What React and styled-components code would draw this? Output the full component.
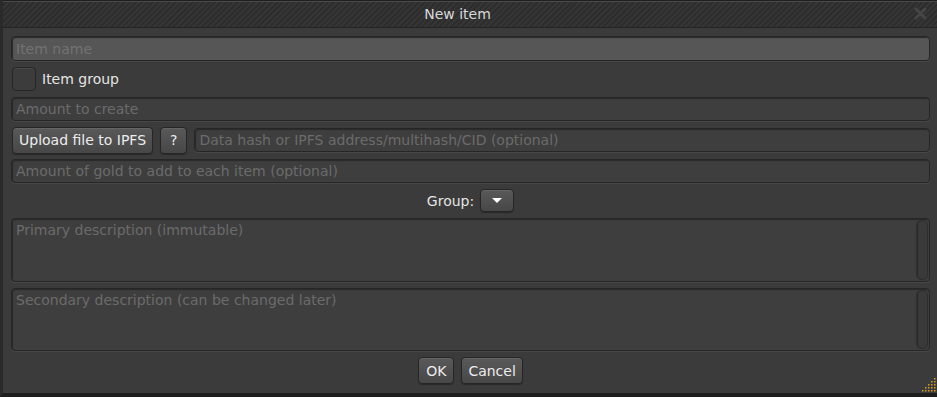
import styled, { createGlobalStyle } from "styled-components";

const Global = createGlobalStyle`
    html, body {
        margin: 0;
        padding: 0;
        background: #1c1c1c;
        font-family: "DejaVu Sans", "Liberation Sans", sans-serif;
        font-size: 14px;
    }
    * { box-sizing: border-box; }
`

const Window = styled.div`
    width: 937px;
    height: 397px;
    display: flex;
    flex-direction: column;
    background: #3b3b3b;
    border-left: 3px solid #2a2a2a;
    border-bottom: 4px solid #1e1e1e;
    position: relative;
    overflow: hidden;
`

const TitleBar = styled.div`
    height: 28px;
    margin-left: -3px;
    padding-right: 22px;
    display: flex;
    align-items: center;
    justify-content: center;
    position: relative;
    color: #d8d8d8;
    font-size: 14px;
    border-top: 1px solid #1f1f1f;
    box-shadow: inset 0 1px 0 #4a4a4a;
    border-bottom: 1px solid #242424;
    background: repeating-linear-gradient(
        135deg,
        #2d2d2d 0px,
        #2d2d2d 2px,
        #353535 2px,
        #353535 4px
    );
`

const Close = styled.svg`
    position: absolute;
    right: 10px;
    top: 6px;
`

const Body = styled.div`
    flex: 1;
    display: flex;
    flex-direction: column;
    gap: 6px;
    padding: 8px 7px 0 8px;
`

const Input = styled.div`
    height: ${p => p.h || 24}px;
    flex: ${p => (p.grow ? 1 : "none")};
    display: flex;
    align-items: center;
    padding: 0 4px;
    border-radius: 4px;
    background: ${p => (p.focus ? "#565656" : "#3e3e3e")};
    border: 1px solid #262626;
    box-shadow: inset 1px 1px 1px #2a2a2a, 0 1px 0 #474747;
    color: ${p => (p.focus ? "#727272" : "#6b6b6b")};
    font-size: 14px;
    white-space: nowrap;
`

const Row = styled.div`
    display: flex;
    align-items: center;
    gap: ${p => p.gap || 7}px;
    justify-content: ${p => p.center ? "center" : "flex-start"};
    height: ${p => p.h}px;
`

const Check = styled.div`
    width: 24px;
    height: 24px;
    margin-left: 1px;
    border-radius: 4px;
    background: #3c3c3c;
    border: 1px solid #262626;
    box-shadow: inset 0 1px 0 #484848;
`

const Label = styled.span`
    color: #e4e4e4;
    font-size: 14px;
`

const Button = styled.div`
    height: ${p => p.h || 26}px;
    padding: 0 ${p => p.px || 7}px;
    display: flex;
    align-items: center;
    justify-content: center;
    border-radius: 4px;
    background: linear-gradient(#595959, #474747);
    border: 1px solid #262626;
    box-shadow: inset 0 1px 0 #656565, 0 1px 1px #2a2a2a;
    color: #ececec;
    font-size: 14px;
    white-space: nowrap;
`

const TextBox = styled.div`
    height: ${p => p.h}px;
    display: flex;
    border-radius: 4px;
    background: #3e3e3e;
    border: 1px solid #262626;
    box-shadow: inset 1px 1px 1px #2a2a2a, 0 1px 0 #474747;
`

const TextArea = styled.div`
    flex: 1;
    padding: 3px 4px;
    color: #6b6b6b;
    font-size: 14px;
`

const Scroll = styled.div`
    width: 12px;
    margin: 1px 1px 1px 0;
    border-radius: 5px;
    background: #3a3a3a;
    border: 1px solid #2e2e2e;
    box-shadow: inset 1px 0 1px #2b2b2b;
`

const Grip = styled.svg`
    position: absolute;
    right: 0;
    bottom: 0;
`

function Field({ text, ...rest }) {
    return <Input {...rest}>{text}</Input>
}

export default function App() {
    const dots = []
    for (let r = 0; r < 5; r++) {
        for (let c = 0; c <= r; c++) {
            dots.push(<rect key={r + "-" + c} x={13 - c * 3} y={1 + r * 3} width="1.5" height="1.5" fill="#d4a017" />)
        }
    }
    return (
        <Window>
            <Global />
            <TitleBar>
                New item
                <Close width="13" height="13" viewBox="0 0 13 13">
                    <path d="M2 2 L11 11 M11 2 L2 11" stroke="#454545" strokeWidth="3" strokeLinecap="round" />
                </Close>
            </TitleBar>
            <Body>
                <Field focus h={25} text="Item name" />
                <Row h={24} gap={6}>
                    <Check />
                    <Label>Item group</Label>
                </Row>
                <Field text="Amount to create" />
                <Row h={26} gap={7}>
                    <Button h={27} px={6} style={{ marginLeft: 1 }}>Upload file to IPFS</Button>
                    <Button h={27} px={9}>?</Button>
                    <Field grow text="Data hash or IPFS address/multihash/CID (optional)" />
                </Row>
                <Field text="Amount of gold to add to each item (optional)" />
                <Row h={23} center gap={6}>
                    <Label>Group:</Label>
                    <Button h={23} px={10}>
                        <svg width="12" height="7" viewBox="0 0 12 7">
                            <path d="M1 1 L11 1 L6 6 Z" fill="#ffffff" />
                        </svg>
                    </Button>
                </Row>
                <TextBox h={64}>
                    <TextArea>Primary description (immutable)</TextArea>
                    <Scroll />
                </TextBox>
                <TextBox h={63}>
                    <TextArea>Secondary description (can be changed later)</TextArea>
                    <Scroll />
                </TextBox>
                <Row h={27} center gap={7}>
                    <Button h={27} px={7}>OK</Button>
                    <Button h={27} px={6}>Cancel</Button>
                </Row>
            </Body>
            <Grip width="16" height="16" viewBox="0 0 16 16">{dots}</Grip>
        </Window>
    )
}
